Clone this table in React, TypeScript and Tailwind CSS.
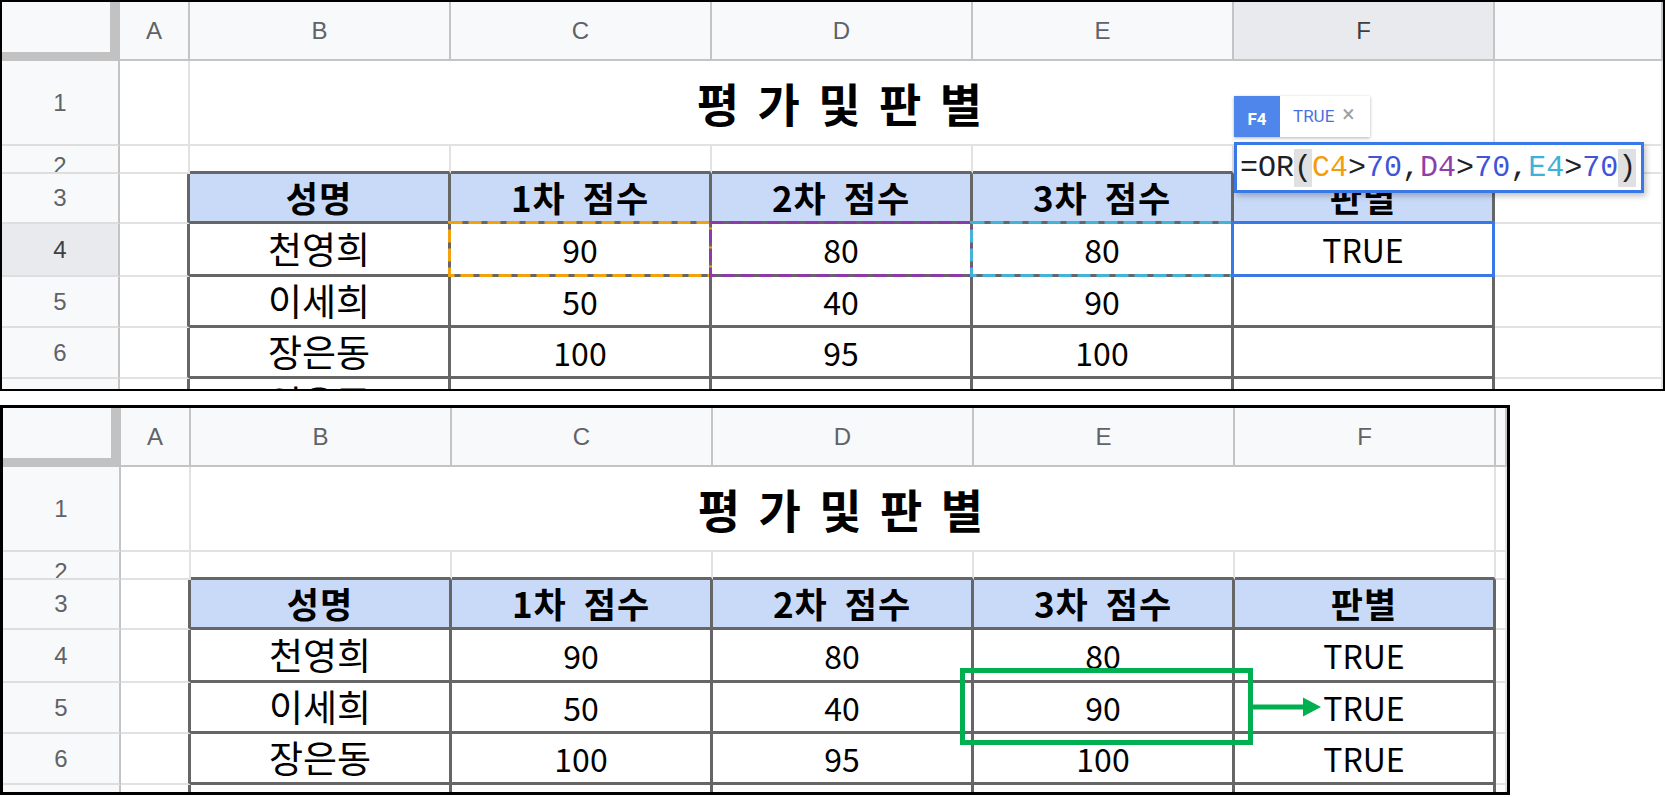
import React from "react";

type Variant = "top" | "bottom";

const names = ["천영희", "이세희", "장은동", "임은주"];
const scores = [
  ["90", "80", "80"],
  ["50", "40", "90"],
  ["100", "95", "100"],
];
const headers = ["성명", "1차 점수", "2차 점수", "3차 점수", "판별"];

const labelFont = "font-['Liberation_Sans',Arial,sans-serif] text-[24px]";
const koFont = "font-['Noto_Sans_CJK_KR','Noto_Sans',sans-serif]";

// cell border presets
const light = "border-r-2 border-b-2 border-[#e2e2e2]";
const dark = "border-r-[3px] border-b-[3px] border-[#666666]";
const darkRight = "border-r-[3px] border-b-2 border-r-[#666666] border-b-[#e2e2e2]";
const darkBottom = "border-r-2 border-b-[3px] border-r-[#e2e2e2] border-b-[#666666]";

const RowLabel = ({ n, active = false, clip = false }: { n: string; active?: boolean; clip?: boolean }) => (
  <div
    className={`flex justify-center border-r-2 border-b-2 border-r-[#c4c4c4] border-b-[#dedede] ${labelFont} ${
      active ? "bg-[#e8eaed] text-[#3c4043]" : "bg-[#f8f9fa] text-[#5f6368]"
    } ${clip ? "items-start overflow-hidden pt-[8px] leading-[24px]" : "items-center"}`}
  >
    {n}
  </div>
);

const ColHead = ({ l, active = false }: { l: string; active?: boolean }) => (
  <div
    className={`flex items-center justify-center border-r-2 border-b-2 border-[#c4c4c4] ${labelFont} ${
      active ? "bg-[#e8eaed] text-[#3c4043]" : "bg-[#f8f9fa] text-[#5f6368]"
    }`}
  >
    {l}
  </div>
);

const Cell = ({ border, children, className = "" }: { border: string; children?: React.ReactNode; className?: string }) => (
  <div className={`relative flex items-center justify-center bg-white ${border} ${className}`}>{children}</div>
);

const DashBox = ({ color }: { color: string }) => (
  <svg className="pointer-events-none absolute -left-[3px] -top-[3px] z-10" width="264" height="56">
    <rect x="1.5" y="1.5" width="261" height="53" fill="none" stroke={color} strokeWidth="3" strokeDasharray="13 6" />
  </svg>
);

function Sheet({ variant }: { variant: Variant }) {
  const top = variant === "top";
  const outer = top
    ? "relative h-[391px] w-full overflow-hidden border-2 border-black bg-white"
    : "relative h-[390px] w-[1510px] overflow-hidden border-[3px] border-black bg-white";

  return (
    <div className={outer}>
      <div className="grid grid-cols-[118px_70px_261px_261px_261px_261px_261px_1fr] grid-rows-[59px_85px_28px_50px_53px_51px_51px_51px]">
        {/* column headers */}
        <div className="border-r-[10px] border-b-[9px] border-[#c2c2c2] bg-[#f8f9fa]" />
        <ColHead l="A" />
        <ColHead l="B" />
        <ColHead l="C" />
        <ColHead l="D" />
        <ColHead l="E" />
        <ColHead l="F" active={top} />
        <ColHead l="" />

        {/* row 1: title */}
        <RowLabel n="1" />
        <Cell border={light} />
        <Cell border={light} className="col-span-5">
          <span className={`${koFont} text-[46px] font-bold tracking-[4px] text-black`}>평 가 및 판 별</span>
        </Cell>
        <Cell border={light} />

        {/* row 2 */}
        <RowLabel n="2" clip />
        <Cell border={light} />
        <Cell border={darkBottom} />
        <Cell border={darkBottom} />
        <Cell border={darkBottom} />
        <Cell border={darkBottom} />
        <Cell border={darkBottom} />
        <Cell border={light} />

        {/* row 3: table header */}
        <RowLabel n="3" />
        <Cell border={darkRight} />
        {headers.map((h) => (
          <Cell key={h} border={`${dark} !bg-[#c9daf8]`}>
            <span className={`${koFont} text-[35px] font-bold tracking-[1px] text-black [word-spacing:8px]`}>{h}</span>
          </Cell>
        ))}
        <Cell border={light} />

        {/* rows 4-7 */}
        {names.map((name, i) => {
          const row = scores[i];
          const result = row ? (top ? (i === 0 ? "TRUE" : "") : "TRUE") : "";
          return (
            <React.Fragment key={name}>
              <RowLabel n={String(i + 4)} active={top && i === 0} />
              <Cell border={darkRight} />
              <Cell border={dark}>
                <span className={`${koFont} text-[37px] text-black`}>{name}</span>
              </Cell>
              {[0, 1, 2].map((j) => (
                <Cell key={j} border={dark}>
                  {row && <span className={`${koFont} text-[32px] text-black`}>{row[j]}</span>}
                  {top && i === 0 && <DashBox color={["#f4a10f", "#8c3aa8", "#43b4d8"][j]} />}
                </Cell>
              ))}
              <Cell border={dark}>
                {result && <span className={`${koFont} text-[32px] text-black`}>{result}</span>}
                {top && i === 0 && (
                  <div className="pointer-events-none absolute -bottom-[3px] -left-[3px] -right-[3px] -top-[3px] z-10 border-[3px] border-[#3b78e7]" />
                )}
              </Cell>
              <Cell border={light} />
            </React.Fragment>
          );
        })}
      </div>

      {top && (
        <>
          {/* value chip above the editor */}
          <div className="absolute left-[1232px] top-[94px] z-20 flex h-[41px] shadow-[0_1px_3px_rgba(0,0,0,0.3)]">
            <div className="flex w-[46px] items-center justify-center bg-[#4f86ec] pt-[6px] font-['Roboto',sans-serif] text-[17px] font-bold text-white">
              F4
            </div>
            <div className="flex w-[90px] items-start bg-white pl-[13px] pt-[8px] font-['Roboto',sans-serif] text-[17px] text-[#4a6fe0]">
              TRUE
              <span className="ml-[8px] -mt-[3px] text-[23px] leading-[28px] text-[#9aa0a6]">×</span>
            </div>
          </div>

          {/* in-cell formula editor */}
          <div className="absolute left-[1232px] top-[140px] z-20 flex h-[51px] w-[410px] items-center border-[3px] border-[#3b78e7] bg-white pl-[3px] font-['Liberation_Mono',monospace] text-[30px] leading-[38px] text-[#202124] shadow-[2px_3px_6px_rgba(0,0,0,0.25)]">
            <span>=OR</span>
            <span className="bg-[#e0e0e0]">(</span>
            <span className="text-[#f29d0c]">C4</span>
            <span>&gt;</span>
            <span className="text-[#3f55d8]">70</span>
            <span>,</span>
            <span className="text-[#8e3fa8]">D4</span>
            <span>&gt;</span>
            <span className="text-[#3f55d8]">70</span>
            <span>,</span>
            <span className="text-[#3fb1d8]">E4</span>
            <span>&gt;</span>
            <span className="text-[#3f55d8]">70</span>
            <span className="bg-[#e0e0e0]">)</span>
          </div>
        </>
      )}

      {!top && (
        <>
          <div className="pointer-events-none absolute left-[957px] top-[260px] z-20 h-[77px] w-[293px] border-[5px] border-[#00b050]" />
          <svg className="pointer-events-none absolute left-[1250px] top-[289px] z-20" width="70" height="20">
            <line x1="0" y1="10" x2="52" y2="10" stroke="#00b050" strokeWidth="5" />
            <polygon points="50,0.5 68,10 50,19.5" fill="#00b050" />
          </svg>
        </>
      )}
    </div>
  );
}

export default function App() {
  return (
    <div className="h-[797px] w-[1665px] bg-white">
      <Sheet variant="top" />
      <div className="h-[14px]" />
      <Sheet variant="bottom" />
    </div>
  );
}
